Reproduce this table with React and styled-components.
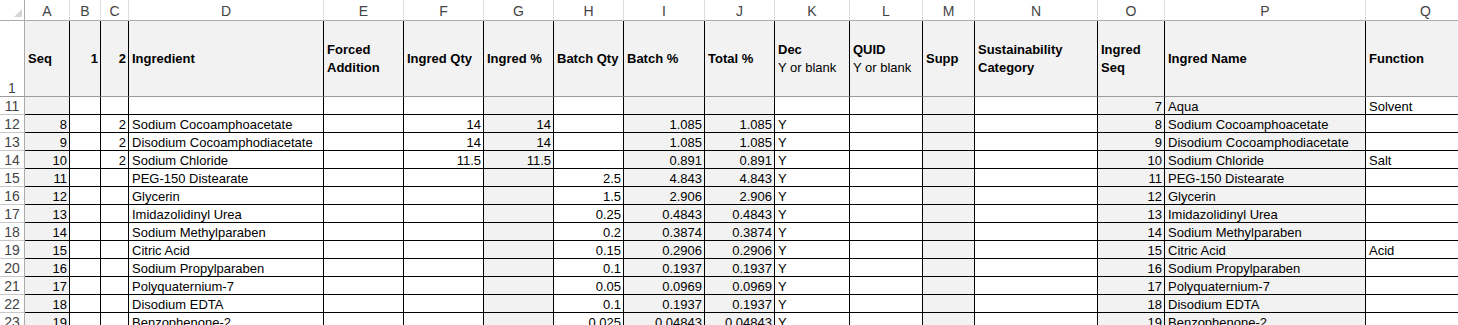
import React from 'react';
import styled, { createGlobalStyle } from 'styled-components';

const GlobalStyle = createGlobalStyle`
  html, body {
    margin: 0;
    padding: 0;
    background: #ffffff;
    overflow: hidden;
  }
  body {
    font-family: 'Liberation Sans', Arial, sans-serif;
    font-size: 13px;
    color: #000;
  }
`;

const columns = [
  { key: 'A', width: 45, fill: true, align: 'right', head: 'Seq', headAlign: 'left' },
  { key: 'B', width: 31, align: 'right', head: '1', headAlign: 'right' },
  { key: 'C', width: 28, align: 'right', head: '2', headAlign: 'right' },
  { key: 'D', width: 195, align: 'left', head: 'Ingredient' },
  { key: 'E', width: 80, align: 'left', head: ['Forced', 'Addition'] },
  { key: 'F', width: 80, align: 'right', head: 'Ingred Qty' },
  { key: 'G', width: 70, fill: true, align: 'right', head: 'Ingred %' },
  { key: 'H', width: 70, align: 'right', head: 'Batch Qty' },
  { key: 'I', width: 81, fill: true, align: 'right', head: 'Batch %' },
  { key: 'J', width: 70, fill: true, align: 'right', head: 'Total %' },
  { key: 'K', width: 75, align: 'left', head: 'Dec', sub: 'Y or blank' },
  { key: 'L', width: 73, align: 'left', head: 'QUID', sub: 'Y or blank' },
  { key: 'M', width: 52, fill: true, align: 'left', head: 'Supp' },
  { key: 'N', width: 123, align: 'left', head: ['Sustainability', 'Category'] },
  { key: 'O', width: 67, fill: true, align: 'right', head: ['Ingred', 'Seq'], headAlign: 'left' },
  { key: 'P', width: 201, fill: true, align: 'left', head: 'Ingred Name' },
  { key: 'Q', width: 120, align: 'left', head: 'Function' },
];

const rows = [
  { n: 11, O: '7', P: 'Aqua', Q: 'Solvent' },
  { n: 12, A: '8', C: '2', D: 'Sodium Cocoamphoacetate', F: '14', G: '14', I: '1.085', J: '1.085', K: 'Y', O: '8', P: 'Sodium Cocoamphoacetate' },
  { n: 13, A: '9', C: '2', D: 'Disodium Cocoamphodiacetate', F: '14', G: '14', I: '1.085', J: '1.085', K: 'Y', O: '9', P: 'Disodium Cocoamphodiacetate' },
  { n: 14, A: '10', C: '2', D: 'Sodium Chloride', F: '11.5', G: '11.5', I: '0.891', J: '0.891', K: 'Y', O: '10', P: 'Sodium Chloride', Q: 'Salt' },
  { n: 15, A: '11', D: 'PEG-150 Distearate', H: '2.5', I: '4.843', J: '4.843', K: 'Y', O: '11', P: 'PEG-150 Distearate' },
  { n: 16, A: '12', D: 'Glycerin', H: '1.5', I: '2.906', J: '2.906', K: 'Y', O: '12', P: 'Glycerin' },
  { n: 17, A: '13', D: 'Imidazolidinyl Urea', H: '0.25', I: '0.4843', J: '0.4843', K: 'Y', O: '13', P: 'Imidazolidinyl Urea' },
  { n: 18, A: '14', D: 'Sodium Methylparaben', H: '0.2', I: '0.3874', J: '0.3874', K: 'Y', O: '14', P: 'Sodium Methylparaben' },
  { n: 19, A: '15', D: 'Citric Acid', H: '0.15', I: '0.2906', J: '0.2906', K: 'Y', O: '15', P: 'Citric Acid', Q: 'Acid' },
  { n: 20, A: '16', D: 'Sodium Propylparaben', H: '0.1', I: '0.1937', J: '0.1937', K: 'Y', O: '16', P: 'Sodium Propylparaben' },
  { n: 21, A: '17', D: 'Polyquaternium-7', H: '0.05', I: '0.0969', J: '0.0969', K: 'Y', O: '17', P: 'Polyquaternium-7' },
  { n: 22, A: '18', D: 'Disodium EDTA', H: '0.1', I: '0.1937', J: '0.1937', K: 'Y', O: '18', P: 'Disodium EDTA' },
  { n: 23, A: '19', D: 'Benzophenone-2', H: '0.025', I: '0.04843', J: '0.04843', K: 'Y', O: '19', P: 'Benzophenone-2' },
];

const Sheet = styled.div`
  display: grid;
  grid-template-columns: 25px ${columns.map((c) => `${c.width}px`).join(' ')};
  grid-template-rows: 21px 76px repeat(${rows.length}, 18px);
  width: max-content;
`;

const Corner = styled.div`
  position: relative;
  background: #fff;
  border-right: 1px solid #ababab;
  border-bottom: 1px solid #ababab;
  box-sizing: border-box;

  &::after {
    content: '';
    position: absolute;
    right: 2px;
    bottom: 3px;
    width: 0;
    height: 0;
    border-left: 8px solid transparent;
    border-bottom: 8px solid #d6d6d6;
  }
`;

const ColHeader = styled.div`
  display: flex;
  align-items: center;
  justify-content: center;
  box-sizing: border-box;
  border-right: 1px solid #dcdcdc;
  border-bottom: 1px solid #ababab;
  background: #fff;
  color: #444;
  font-size: 14px;
  line-height: 1;
  padding-top: 1px;
`;

const RowHeader = styled.div`
  display: flex;
  align-items: flex-end;
  justify-content: center;
  box-sizing: border-box;
  border-right: 1px solid #ababab;
  border-bottom: 1px solid ${(p) => (p.$frozen ? '#9b9b9b' : '#c8c8c8')};
  background: #fff;
  color: #444;
  font-size: 14px;
  line-height: 16px;
`;

const HeadCell = styled.div`
  display: flex;
  flex-direction: column;
  justify-content: center;
  align-items: ${(p) => (p.$align === 'right' ? 'flex-end' : 'flex-start')};
  box-sizing: border-box;
  border-right: 1px solid #000;
  border-bottom: 1px solid #9b9b9b;
  background: #f2f2f2;
  padding: 0 2px 0 3px;
  font-weight: bold;
  line-height: 18px;
  white-space: nowrap;
  overflow: hidden;
`;

const SubLine = styled.span`
  font-weight: normal;
`;

const Cell = styled.div`
  display: flex;
  align-items: flex-end;
  justify-content: ${(p) => (p.$align === 'right' ? 'flex-end' : 'flex-start')};
  box-sizing: border-box;
  border-right: 1px solid #000;
  border-bottom: 1px solid #000;
  background: ${(p) => (p.$fill ? '#f2f2f2' : '#fff')};
  padding: 0 2px 0 3px;
  line-height: 15px;
  white-space: nowrap;
  overflow: ${(p) => (p.$spill ? 'visible' : 'hidden')};
  position: relative;
  z-index: ${(p) => (p.$spill ? 1 : 0)};
`;

function headContent(col) {
  if (Array.isArray(col.head)) {
    return col.head.map((line) => <span key={line}>{line}</span>);
  }
  if (col.sub) {
    return [<span key="h">{col.head}</span>, <SubLine key="s">{col.sub}</SubLine>];
  }
  return <span>{col.head}</span>;
}

export default function App() {
  return (
    <>
      <GlobalStyle />
      <Sheet>
        <Corner />
        {columns.map((c) => (
          <ColHeader key={`ch-${c.key}`}>{c.key}</ColHeader>
        ))}

        <RowHeader $frozen>1</RowHeader>
        {columns.map((c) => (
          <HeadCell key={`h-${c.key}`} $align={c.headAlign || 'left'}>
            {headContent(c)}
          </HeadCell>
        ))}

        {rows.map((r) => (
          <React.Fragment key={r.n}>
            <RowHeader>{r.n}</RowHeader>
            {columns.map((c) => (
              <Cell key={`${r.n}-${c.key}`} $fill={c.fill} $align={c.align}>
                {r[c.key] || ''}
              </Cell>
            ))}
          </React.Fragment>
        ))}
      </Sheet>
    </>
  );
}
